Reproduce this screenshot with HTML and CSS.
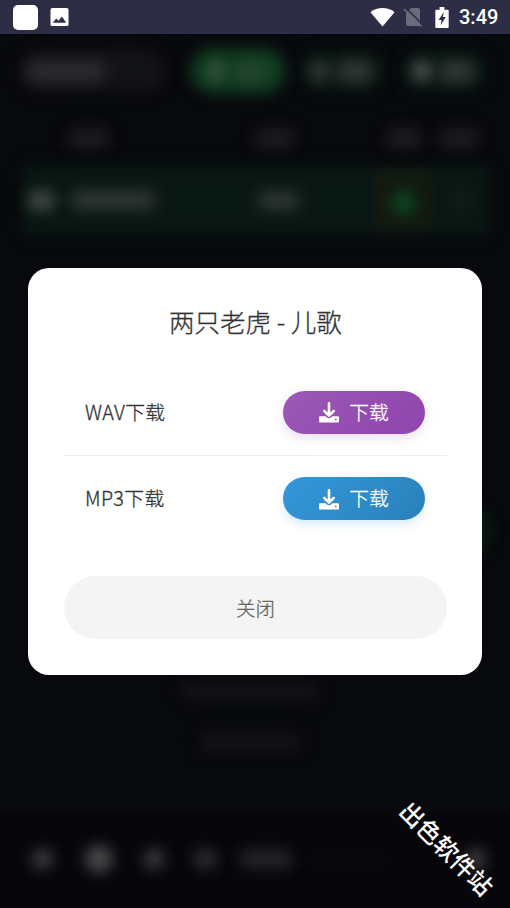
FILE: index.html
```html
<!DOCTYPE html>
<html lang="zh-CN">
<head>
<meta charset="utf-8">
<meta name="viewport" content="width=device-width">
<title>两只老虎 - 儿歌</title>
<link rel="stylesheet" href="styles.css">
</head>
<body>
<header class="status">
  <span class="status-app"></span>
  <svg class="status-photo" viewBox="0 0 20 20"><rect x=".5" y=".5" width="19" height="19" rx="2" fill="#fff"/><path d="M3 16 6.500 11.500 9 14 12.500 9.500 17 16z" fill="#2d2e45"/></svg>
  <span class="status-space"></span>
  <svg class="status-wifi" viewBox="0 0 26 20"><path d="M.5 5C7.500-.8 18.500-.8 25.500 5L13 20z" fill="#fff"/></svg>
  <svg class="status-sim" viewBox="0 0 18 20"><path d="M7 1h7a2 2 0 0 1 2 2v15a1 1 0 0 1-1 1H4a2 2 0 0 1-2-2V6z" fill="#6b6b7b"/><path d="M1.500 .5 19 18" stroke="#2d2e45" stroke-width="1.700"/><path d="M0 2 17.500 19.500" stroke="#6b6b7b" stroke-width="1.700"/></svg>
  <svg class="status-battery" viewBox="0 0 14 22"><path d="M1 3h3.500V0h5v3H13a1 1 0 0 1 1 1v17a1 1 0 0 1-1 1H1a1 1 0 0 1-1-1V4a1 1 0 0 1 1-1z" fill="#fff"/><path d="M9 5 3.500 13.500H6.500L5.500 19 11 10.500H7.800z" fill="#2d2e45"/></svg>
  <time class="status-time">3:49</time>
</header>
<main class="stage">
  <div class="app" aria-hidden="true">
    <div class="toolbar">
      <div class="search"><i class="smudge search-text"></i></div>
      <div class="tab tab-active"><i class="smudge dot"></i><i class="smudge label"></i></div>
      <div class="tab"><i class="smudge dot dim"></i><i class="smudge label"></i></div>
      <div class="tab"><i class="smudge dot"></i><i class="smudge label"></i></div>
    </div>
    <div class="columns heading"><i class="smudge col-song"></i><i class="smudge col-artist"></i><i class="smudge col-get"></i><i class="smudge col-fav"></i></div>
    <div class="columns track"><i class="smudge bars"></i><i class="smudge name"></i><i class="smudge artist"></i><span class="get"><i class="smudge arrow"></i></span><i class="smudge heart"></i></div>
    <div class="middle"><i class="side-button"></i></div>
    <div class="notes"><i class="smudge note-long"></i><i class="smudge note-short"></i></div>
    <div class="player"><i class="smudge prev"></i><i class="smudge play"></i><i class="smudge next"></i><i class="smudge mode"></i><i class="smudge clock"></i><i class="smudge line"></i><i class="smudge volume"></i></div>
  </div>
  <section class="dialog">
    <h1 class="title">两只老虎 - 儿歌</h1>
    <div class="option">
      <span class="format">WAV下载</span>
      <button class="download wav"><svg viewBox="0 0 20 20"><path d="M10 1.200V13M5.300 9 10 13.600 14.700 9" fill="none" stroke="#fff" stroke-width="2.600" stroke-linecap="round" stroke-linejoin="round"/><path d="M1 14.200H6.500Q10 18.300 13.500 14.200H19a1 1 0 0 1 1 1V19.500a1 1 0 0 1-1 1H1a1 1 0 0 1-1-1v-4.300a1 1 0 0 1 1-1z" fill="#fff"/><circle class="led" cx="16.800" cy="17.400" r=".9"/></svg><span>下载</span></button>
    </div>
    <div class="option">
      <span class="format">MP3下载</span>
      <button class="download mp3"><svg viewBox="0 0 20 20"><path d="M10 1.200V13M5.300 9 10 13.600 14.700 9" fill="none" stroke="#fff" stroke-width="2.600" stroke-linecap="round" stroke-linejoin="round"/><path d="M1 14.200H6.500Q10 18.300 13.500 14.200H19a1 1 0 0 1 1 1V19.500a1 1 0 0 1-1 1H1a1 1 0 0 1-1-1v-4.300a1 1 0 0 1 1-1z" fill="#fff"/><circle class="led" cx="16.800" cy="17.400" r=".9"/></svg><span>下载</span></button>
    </div>
    <button class="close">关闭</button>
  </section>
  <div class="watermark">出色软件站</div>
</main>
</body>
</html>
```

FILE: styles.css
```css
* { box-sizing: border-box; }
body { margin: 0; height: 908px; overflow: hidden; background: #08090d; font-family: "Noto Sans CJK SC", sans-serif; }
button { border: 0; font-family: inherit; font-weight: 300; }
svg { display: block; overflow: visible; flex: none; }

.status { height: 34px; background: #2d2e45; display: flex; align-items: center; padding: 0 12px 0 13px; }
.status-app { width: 25px; height: 25px; border-radius: 5px; background: #fff; }
.status-photo { width: 19px; height: 20px; margin-left: 12px; }
.status-space { flex: 1; }
.status-wifi { width: 25px; height: 20px; margin-right: 9px; }
.status-sim { width: 18px; height: 20px; margin-right: 13px; }
.status-battery { width: 14px; height: 21px; margin-right: 10px; }
.status-time { font: 500 20px/34px Roboto, sans-serif; color: #fff; width: 39px; white-space: nowrap; }

.stage { position: relative; height: 874px; display: flex; flex-direction: column; align-items: center; padding-top: 233.500px; }
.app { position: absolute; inset: 0; overflow: hidden; display: flex; flex-direction: column; }

.smudge { display: block; flex: none; border-radius: 8px; filter: blur(7px); background: #2c2c2f; }
.toolbar { height: 76px; display: flex; align-items: center; padding: 0 19px 2px 20px; }
.search { width: 144px; height: 42px; display: flex; align-items: center; padding-left: 7px; margin-right: 26px; }
.search, .tab, .track { position: relative; isolation: isolate; }
.search::before, .tab::before, .track::before { content: ""; position: absolute; inset: 0; z-index: -1; border-radius: 20px; background: #131418; filter: blur(7px); }
.search-text { width: 78px; height: 20px; }
.tab { width: 85px; height: 40px; display: flex; align-items: center; gap: 7px; padding-left: 10px; margin-right: 17px; }
.tab:last-child { margin: 0; }
.tab::before { background: #0b1914; }
.tab-active { width: 96px; height: 46px; padding-left: 16px; margin-right: 14px; }
.tab-active::before { background: #103a20; border-radius: 23px; }
.dot { width: 20px; height: 20px; border-radius: 50%; background: #505351; }
.dot.dim { background: #343937; }
.label { width: 35px; height: 21px; background: #303634; }
.tab-active .dot { background: #37553f; }
.tab-active .label { background: #23452f; }

.columns { display: flex; align-items: center; }
.heading { height: 56px; padding-left: 68px; }
.heading .smudge { height: 20px; background: #1c1c20; }
.col-song { width: 41px; margin-right: 146px; }
.col-artist { width: 40px; margin-right: 91px; }
.col-get { width: 36px; margin-right: 17px; }
.col-fav { width: 40px; }
.track { height: 68px; margin: 0 21px 0 23px; padding-left: 5px; }
.track::before { background: #0a1813; border-radius: 4px; }
.bars { width: 27px; height: 19px; background: #414744; margin-right: 16px; }
.name { width: 84px; height: 20px; background: #2e3432; margin-right: 103px; }
.artist { width: 41px; height: 19px; background: #2d3532; margin-right: 77px; }
.get { width: 54px; height: 58px; display: grid; place-items: center; position: relative; isolation: isolate; margin-right: 20px; }
.get::before { content: ""; position: absolute; inset: 0; z-index: -1; background: #131a11; border: 2px solid #1e1b10; filter: blur(4px); }
.arrow { width: 23px; height: 22px; background: #0b4520; margin-top: 6px; }
.heart { width: 22px; height: 16px; background: #12201a; }
.middle { height: 410px; display: flex; justify-content: flex-end; align-items: flex-end; padding: 0 19px 85px 0; }
.side-button { width: 90px; height: 57px; border-radius: 26px; background: #09190f; filter: blur(6px); }
.notes { height: 168px; display: flex; flex-direction: column; align-items: center; gap: 31px; padding-top: 37px; }
.notes .smudge { height: 20px; background: #121216; }
.note-long { width: 138px; margin-right: 10px; }
.note-short { width: 102px; margin-right: 10px; }
.player { height: 96px; display: flex; align-items: center; background: #07070b; padding: 0 0 3px 32px; }
.player .smudge { height: 20px; }
.player .prev { width: 21px; margin-right: 32px; background: #3a3a3c; }
.player .play { width: 28px; height: 28px; background: #464648; margin-right: 31px; border-radius: 14px; }
.player .next { width: 20px; margin-right: 29px; background: #3a3a3c; }
.mode { width: 25px; background: #29292b; margin-right: 22px; }
.clock { width: 52px; background: #232326; margin-right: 14px; }
.player .line { width: 82px; height: 8px; background: #0a0a0e; margin-right: 78px; }
.volume { width: 20px; background: #3c3c3e; }

.dialog { position: relative; width: 453.400px; height: 407.500px; border-radius: 21px; background: #fff; padding: 35.500px 34.700px 35px 35.700px; }
.title, .option, .close { -webkit-text-stroke: .3px currentColor; }
.title { margin: 0 0 29px; height: 37px; line-height: 36px; text-align: center; font-size: 25.500px; font-weight: 300; color: #333; }
.option { height: 86px; display: flex; align-items: center; justify-content: space-between; padding: 0 22px 0 21px; font-size: 19.800px; font-weight: 300; color: #333; }
.option span { position: relative; top: -1px; }
.format { letter-spacing: .35px; }
.option + .option { border-top: 1px solid #eee; }
.download { width: 142px; height: 43px; border-radius: 22px; display: flex; align-items: center; justify-content: center; gap: 10px; padding: 0; font-size: 19.800px; color: #fff; }
.download svg { width: 20px; height: 20px; }
.wav { background: linear-gradient(135deg, #9b59b6, #8e44ad); box-shadow: 0 4px 11px #9b59b633; }
.mp3 { background: linear-gradient(135deg, #3498db, #2980b9); box-shadow: 0 4px 11px #3498db33; }
.wav .led { fill: #934eb0; }
.mp3 .led { fill: #2e8cca; }
.close { display: block; width: 383px; height: 63px; margin-top: 35px; padding: 0; border-radius: 32px; background: #f4f4f4; color: #666; font-size: 19.500px; }

.watermark { position: absolute; left: 382px; top: 796px; width: 130px; line-height: 36px; text-align: center; font-size: 24px; color: #fff; font-weight: 500; white-space: nowrap; transform: rotate(45deg); }
```
